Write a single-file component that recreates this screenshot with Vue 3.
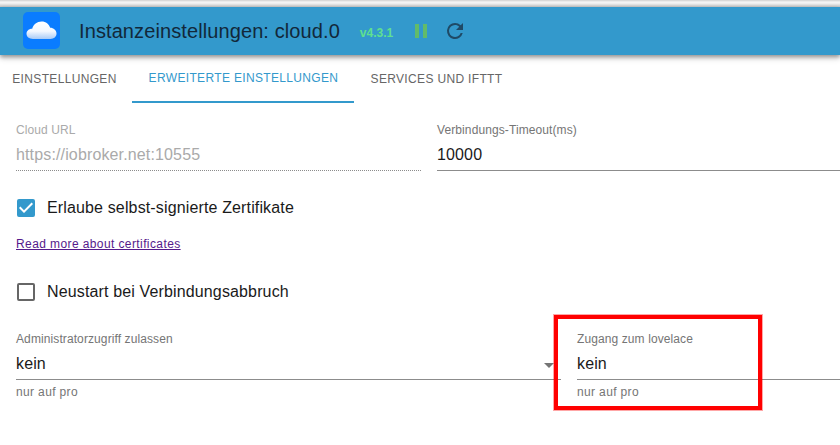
<template>
  <div class="page">
    <div class="topstrip"></div>
    <header class="appbar">
      <div class="logo">
        <svg width="37" height="37" viewBox="0 0 37 37">
          <defs>
            <linearGradient id="cl" x1="0" y1="0" x2="0" y2="1">
              <stop offset="0" stop-color="#ffffff" />
              <stop offset="0.55" stop-color="#f4f8ff" />
              <stop offset="1" stop-color="#a9cbf7" />
            </linearGradient>
          </defs>
          <rect width="37" height="37" rx="5" fill="#0a7cff" />
          <path d="M10 27 C6 27 3.5 24.6 3.5 21.8 C3.5 18.8 6 16.6 9.2 16.7 C10.4 12.6 14 9.5 18.6 9.5 C23 9.5 26 12 27.2 15.8 C30.5 15.8 33.5 18.2 33.5 21.6 C33.5 24.8 31 27 27.6 27 Z" fill="url(#cl)" />
        </svg>
      </div>
      <h1 class="title">Instanzeinstellungen: cloud.0</h1>
      <span class="version">v4.3.1</span>
      <div class="pause"><i></i><i></i></div>
      <svg class="reload" width="24" height="24" viewBox="0 0 24 24">
        <path fill="#1f4a66" d="M17.65 6.35A7.96 7.96 0 0 0 12 4a8 8 0 1 0 7.73 10h-2.08A6 6 0 1 1 12 6c1.66 0 3.14.69 4.22 1.78L13 11h7V4l-2.35 2.35z" />
      </svg>
    </header>

    <nav class="tabs">
      <div class="tab tab-a">Einstellungen</div>
      <div class="tab tab-b active">Erweiterte Einstellungen</div>
      <div class="tab tab-c">Services und IFTTT</div>
    </nav>

    <main class="form">
      <div class="row row-url">
        <div class="field left disabled">
          <label>Cloud URL</label>
          <div class="value">https://iobroker.net:10555</div>
        </div>
        <div class="field right">
          <label>Verbindungs-Timeout(ms)</label>
          <div class="value">10000</div>
        </div>
      </div>

      <div class="check check-first">
        <svg width="24" height="24" viewBox="0 0 24 24">
          <path fill="#3399cc" d="M19 3H5a2 2 0 0 0-2 2v14a2 2 0 0 0 2 2h14a2 2 0 0 0 2-2V5a2 2 0 0 0-2-2zm-9 14-5-5 1.41-1.41L10 14.17l7.59-7.59L19 8l-9 9z" />
        </svg>
        <span>Erlaube selbst-signierte Zertifikate</span>
      </div>

      <a class="link">Read more about certificates</a>

      <div class="check check-second">
        <svg width="24" height="24" viewBox="0 0 24 24">
          <path fill="#666666" d="M19 5v14H5V5h14m0-2H5a2 2 0 0 0-2 2v14a2 2 0 0 0 2 2h14a2 2 0 0 0 2-2V5a2 2 0 0 0-2-2z" />
        </svg>
        <span>Neustart bei Verbindungsabbruch</span>
      </div>

      <div class="row row-select">
        <div class="field sel-left">
          <label>Administratorzugriff zulassen</label>
          <div class="value">kein<b class="arrow"></b></div>
          <small>nur auf pro</small>
        </div>
        <div class="field sel-right">
          <label>Zugang zum lovelace</label>
          <div class="value">kein</div>
          <small>nur auf pro</small>
        </div>
      </div>
    </main>

    <div class="redbox"></div>
  </div>
</template>

<script setup>
</script>

<style>
html, body { margin: 0; padding: 0; background: #fff; overflow: hidden; }
</style>

<style scoped>
.page {
  position: relative;
  width: 840px;
  height: 445px;
  overflow: hidden;
  background: #fff;
  font-family: "Liberation Sans", Arial, sans-serif;
  color: #1a1a1a;
}
.topstrip {
  height: 7px;
  background: linear-gradient(#d0d0d0 0, #f4f4f4 2px, #f4f4f4 3px, #c4c4c4 7px);
}
.appbar {
  position: relative;
  z-index: 1;
  display: flex;
  align-items: center;
  height: 48px;
  padding-left: 23px;
  background: #3399cc;
  box-shadow: 0 2px 4px rgba(0, 0, 0, 0.35), 0 4px 6px rgba(0, 0, 0, 0.12);
}
.logo { width: 37px; height: 37px; margin-top: -1px; }
.logo svg { display: block; }
.title {
  margin: 0 0 0 19px;
  font-size: 20px;
  font-weight: 400;
  letter-spacing: 0.1px;
  color: #12283a;
  white-space: nowrap;
}
.version {
  margin-left: 20px;
  margin-top: 3px;
  font-size: 12px;
  font-weight: 700;
  color: #5fe08f;
}
.pause { display: flex; gap: 4px; margin-left: 22px; }
.pause i { display: block; width: 4px; height: 14px; background: #62bb6a; }
.reload { margin-left: 16px; }

.tabs {
  display: flex;
  height: 48px;
  font-size: 12px;
  letter-spacing: 0.34px;
  text-transform: uppercase;
  color: #666;
}
.tab {
  display: flex;
  align-items: center;
  justify-content: center;
  box-sizing: border-box;
  height: 48px;
  padding-bottom: 1px;
}
.tab-a { width: 129px; }
.tab-b { width: 222px; margin-left: 3px; padding-left: 1px; }
.tab-c { width: 165px; }
.tab.active { color: #3399cc; border-bottom: 2px solid #3399cc; }

.form { padding: 0 0 0 16px; }
.row { display: flex; }
.row-url { margin-top: 20px; }
.field { position: relative; box-sizing: border-box; }
.left { width: 405px; }
.right { width: 403px; margin-left: 16px; }
.field label {
  display: block;
  font-size: 12px;
  line-height: 14px;
  letter-spacing: 0.1px;
  color: #757575;
}
.field .value {
  position: relative;
  font-size: 16px;
  line-height: 20px;
  letter-spacing: 0.14px;
  padding-top: 8px;
  padding-bottom: 5px;
  color: #1a1a1a;
  border-bottom: 1px solid #8c8c8c;
}
.disabled label, .disabled .value { color: #aaa; }
.disabled .value { border-bottom: 1px dotted #8c8c8c; }

.check {
  display: flex;
  align-items: center;
  font-size: 16px;
  letter-spacing: 0.14px;
  color: #1a1a1a;
  height: 24px;
  margin-left: -2px;
}
.check span { margin-left: 9px; }
.check svg { display: block; flex: none; }
.check-first { margin-top: 25px; }
.check-second { margin-top: 28px; }
.link {
  display: inline-block;
  margin-top: 17px;
  font-size: 12px;
  line-height: 14px;
  letter-spacing: 0.4px;
  color: #551a8b;
  text-decoration: underline;
}
.row-select { margin-top: 28px; }
.sel-left { width: 545px; }
.sel-right { width: 263px; margin-left: 16px; flex: none; }
.field small {
  display: block;
  margin-top: 5px;
  font-size: 12px;
  line-height: 14px;
  letter-spacing: 0.36px;
  color: #757575;
}
.arrow {
  position: absolute;
  right: 7px;
  top: 17px;
  width: 0;
  height: 0;
  border-left: 5px solid transparent;
  border-right: 5px solid transparent;
  border-top: 5px solid #757575;
}
.redbox {
  position: absolute;
  left: 554px;
  top: 315px;
  width: 200px;
  height: 87px;
  border: 4px solid #ff0000;
  box-shadow: 0 0 0 1px rgba(255, 0, 0, 0.35);
}
</style>
